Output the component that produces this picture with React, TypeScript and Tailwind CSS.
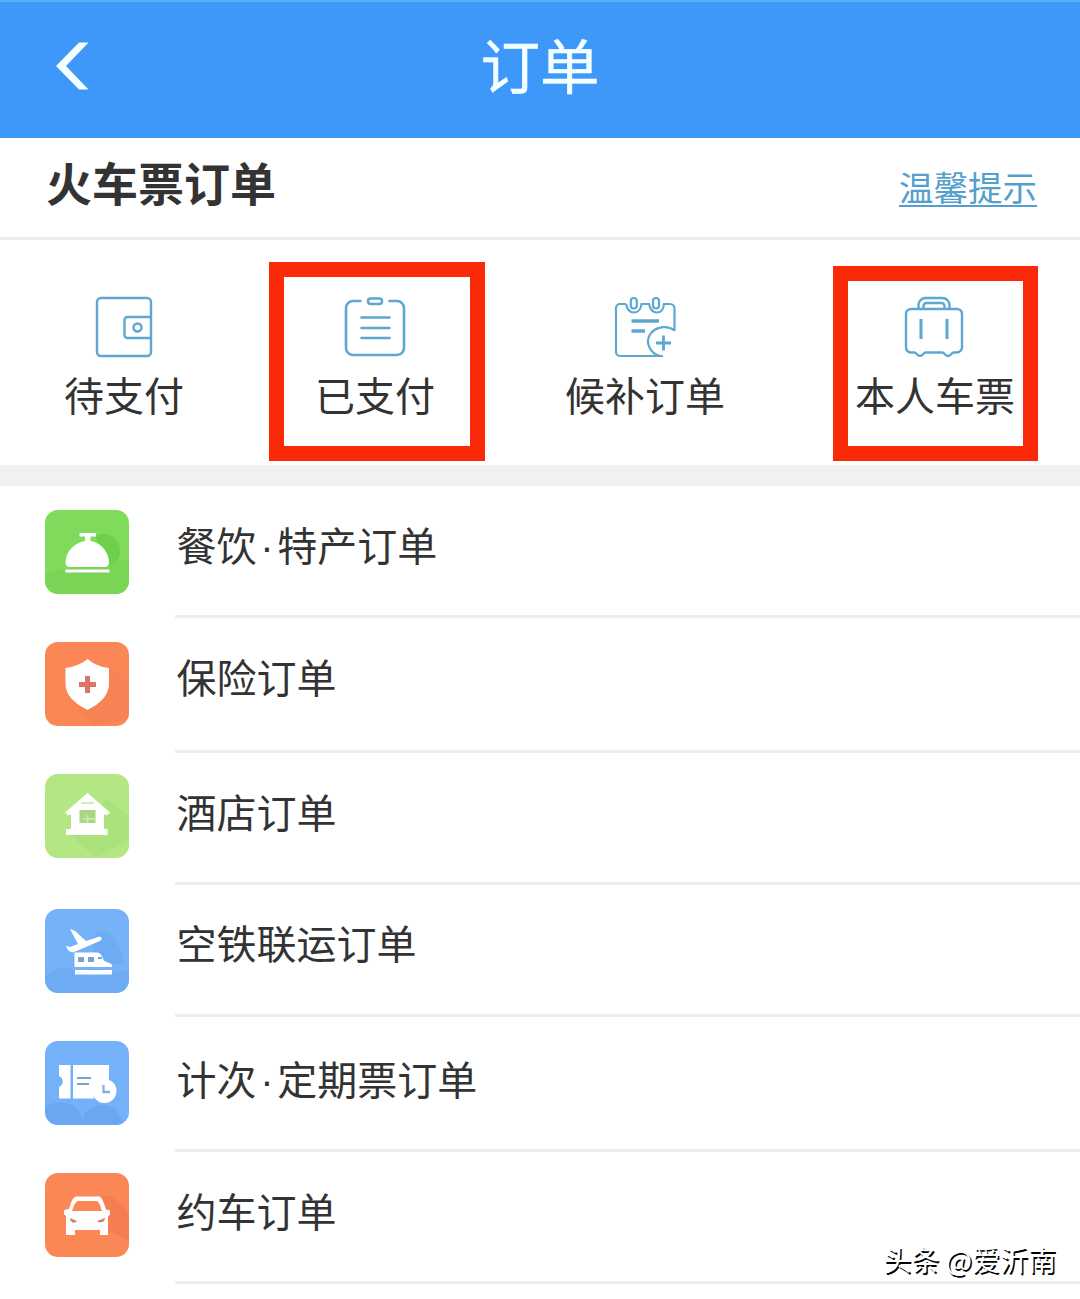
import React from "react";

function WalletIcon() {
  return (
    <svg width="64" height="64" viewBox="0 0 64 64" fill="none" stroke="#5da7d0" strokeWidth="2.4">
      <rect x="5" y="2" width="54" height="58" rx="4" />
      <path d="M59 21H35.500a3 3 0 0 0-3 3v15a3 3 0 0 0 3 3H59" />
      <circle cx="45.500" cy="31.500" r="4" />
    </svg>
  );
}

function ClipboardIcon() {
  return (
    <svg width="64" height="64" viewBox="0 0 64 64" fill="none" stroke="#5da7d0" strokeWidth="2.6" strokeLinecap="round">
      <path d="M17.500 5H10a7 7 0 0 0-7 7v40a7 7 0 0 0 7 7h44a7 7 0 0 0 7-7V12a7 7 0 0 0-7-7h-7.500" />
      <rect x="25" y="2.500" width="14" height="5.500" rx="2.700" />
      <path d="M18.500 21.500H46.500M18.500 32H46.500M18.500 42H46.500" />
    </svg>
  );
}

function CalendarPlusIcon() {
  return (
    <svg width="64" height="64" viewBox="0 0 64 64" fill="none" stroke="#5da7d0" strokeWidth="2.2">
      <path d="M13 8H7a4 4 0 0 0-4 4v44a4 4 0 0 0 4 4h43" />
      <path d="M13 8c1 5 4 8.500 8 8.500S28 13 28.500 8H36c1 5 4 8.500 8 8.500S50.500 13 51 8h6a4.500 4.500 0 0 1 4.500 4.500V35" />
      <rect x="17.800" y="2" width="6" height="10.500" rx="3" />
      <rect x="40" y="2" width="6" height="10.500" rx="3" />
      <path d="M61.500 34.500C54 28.500 42 31 37 38.500c-5 8 0 19 10 21.500" />
      <path d="M18.500 25H46M18.500 35H32" strokeWidth="3.400" />
      <path d="M43 47H58M50.500 39.500V54.500" strokeWidth="2.800" />
    </svg>
  );
}

function SuitcaseIcon() {
  return (
    <svg width="64" height="64" viewBox="0 0 64 64" fill="none" stroke="#5da7d0" strokeWidth="2.4">
      <path d="M15.500 13V9a7 7 0 0 1 7-7h17a7 7 0 0 1 7 7v4" />
      <path d="M20.500 13V10a3 3 0 0 1 3-3h15a3 3 0 0 1 3 3v3" />
      <path d="M8 13h46a5 5 0 0 1 5 5v33a5.500 5.500 0 0 1-5.500 5.500H50.500c-2 0-2.500 3.500-5.500 3.500s-3.500-3.500-5.500-3.500h-17c-2 0-2.500 3.500-5.500 3.500s-3.500-3.500-5.500-3.500H8A5 5 0 0 1 3 51V18a5 5 0 0 1 5-5Z" />
      <path d="M18 23V43M44 23V43" strokeWidth="3" />
    </svg>
  );
}

function BellTile() {
  return (
    <svg width="84" height="84" viewBox="0 0 84 84">
      <rect width="84" height="84" fill="#80da5c" />
      <path d="M50 26c12-6 25 2 25 15 0 8-4 13-12 15Z" fill="#69cc47" opacity=".8" />
      <path d="M0 64l26-6 58-8v34H0Z" fill="#75d252" opacity=".55" />
      <path d="M34.500 23H51v3.500h-5.500V31c11 2 18.500 11 18.500 22 0 2-1.500 4-4 4H24.500c-2.500 0-4-2-4-4 0-11 8-20 19.500-22v-4.500h-5.500ZM20.500 59.500H64.500v3H20.500Z" fill="#fff" />
    </svg>
  );
}

function ShieldTile() {
  return (
    <svg width="84" height="84" viewBox="0 0 84 84">
      <rect width="84" height="84" fill="#fb8756" />
      <path d="M64 25l20 17v35L48 84 27 58Z" fill="#f27950" opacity=".35" />
      <path d="M42.500 17c6 5 13 8 21.500 9v16c0 11-9 20-21.500 26C30 62 20.500 53 20.500 42V26c8-1 16-4 22-9Z" fill="#fff" />
      <path d="M42.500 34v17M34 42.500h17" stroke="#dd7465" strokeWidth="5" />
    </svg>
  );
}

function HouseTile() {
  return (
    <svg width="84" height="84" viewBox="0 0 84 84">
      <rect width="84" height="84" fill="#b3e783" />
      <path d="M62 25l22 17v24L50 84 27 62Z" fill="#a2dc70" opacity=".4" />
      <path d="M42.500 19L65 38.500l-3.500 3-2.500-1.500v15h3.500v6H21v-6h5V40l-2.500 1.500-3.500-3Z" fill="#fff" />
      <path d="M34.500 36h16v13h-16Z" fill="#a9d884" />
      <path d="M42.500 41v8M38 45h12" stroke="#cceab4" strokeWidth="1.500" />
      <path d="M36 29h13" stroke="#d1edbb" strokeWidth="2" />
    </svg>
  );
}

function PlaneTile() {
  return (
    <svg width="84" height="84" viewBox="0 0 84 84">
      <rect width="84" height="84" fill="#76b2f8" />
      <path d="M47 28c6-7 14-7 20-1 6 7 11 17 12 28H50ZM0 67c16-12 25-10 35 0 8-8 20-10 29-1 7-5 13-6 20-2v20H0Z" fill="#619fe9" opacity=".4" />
      <path d="M25 20l5 2 11 10 12-4c4-1 5 2 2 4L29 43c-4 1-6-1-8-6l4 1 8-3Z" fill="#fff" />
      <path d="M29.500 43.500H52c4 0 5 4 7 8 2 2 8 2 8 5v1.500H29.500ZM30 61h37v4.500H30Z" fill="#fff" />
      <path d="M33 48h6v5h-6ZM43 48h6v5h-6ZM53 48h4v2h-4ZM53 51.500h5" fill="#78a4d1" />
    </svg>
  );
}

function TicketTile() {
  return (
    <svg width="84" height="84" viewBox="0 0 84 84">
      <rect width="84" height="84" fill="#74b1f8" />
      <path d="M0 65c14-6 24-4 31 2 5 4 6 10 6 17H0ZM36 84c2-13 10-20 22-20s17 8 20 20Z" fill="#609fe9" opacity=".55" />
      <path d="M14 24h11.500v33.500H14V46c5-2 5-9 0-11ZM28 24h36v15c-7-2-15 3-16 12l1 6.500H28Z" fill="#fff" />
      <path d="M32 37h14M32 43h12" stroke="#79a4d2" strokeWidth="2" />
      <circle cx="59.500" cy="50" r="12" fill="#fff" />
      <path d="M58.500 44v7H65" fill="none" stroke="#83b0e0" strokeWidth="2.300" />
    </svg>
  );
}

function CarTile() {
  return (
    <svg width="84" height="84" viewBox="0 0 84 84">
      <rect width="84" height="84" fill="#fb8756" />
      <path d="M57 23c10-2 20 8 27 18v27L62 57Z" fill="#ed714d" opacity=".45" />
      <path fillRule="evenodd" d="M31 23.500h23c3.500 1 5 7 7 13l4 1v4l-2 2V62h-8v-5H30v5h-9V43l-2-2v-4l5-1c2-6 3-11 7-12.500ZM32.500 28c-3 2-4 6-5.500 10h30c-1.500-4-2-8-5-10Z" fill="#fff" />
      <path d="M25 45l7 3c-2 3-7 2-7-3ZM60 45l-8 3c3 3 8 1 8-3Z" fill="#cf8269" />
    </svg>
  );
}

const rows = [
  { label: ["餐饮", "特产订单"], Tile: BellTile, height: "h-[132px]", icon: "mt-[24px]", text: "mt-[31px]" },
  { label: ["保险订单"], Tile: ShieldTile, height: "h-[135px]", icon: "mt-[24px]", text: "mt-[31px]" },
  { label: ["酒店订单"], Tile: HouseTile, height: "h-[132px]", icon: "mt-[21px]", text: "mt-[31px]" },
  { label: ["空铁联运订单"], Tile: PlaneTile, height: "h-[132px]", icon: "mt-[24px]", text: "mt-[30px]" },
  { label: ["计次", "定期票订单"], Tile: TicketTile, height: "h-[135px]", icon: "mt-[24px]", text: "mt-[34px]" },
  { label: ["约车订单"], Tile: CarTile, height: "h-[132px]", icon: "mt-[21px]", text: "mt-[31px]" },
];

const shortcuts = [
  { label: "待支付", Icon: WalletIcon, cell: "w-[248px]", frame: "" },
  { label: "已支付", Icon: ClipboardIcon, cell: "w-[254px]", frame: "left-[21px] top-[22px] w-[216px] h-[199px]" },
  { label: "候补订单", Icon: CalendarPlusIcon, cell: "w-[286px]", frame: "" },
  { label: "本人车票", Icon: SuitcaseIcon, cell: "w-[292px] pl-[2px]", frame: "left-[45px] top-[26px] w-[205px] h-[195px]" },
];

export default function App() {
  return (
    <div className="relative flex h-[1299px] w-[1080px] flex-col overflow-hidden bg-white font-['Noto_Sans_CJK_SC',sans-serif] text-[#333333]">
      <header className="grid h-[138px] shrink-0 grid-cols-[1fr_auto_1fr] items-center border-t-2 border-[#58adf9] bg-[#3d98f9] pb-[8px] text-[#f4ffff]">
        <svg className="ml-[54px]" width="38" height="52" viewBox="0 0 38 52">
          <path d="M25 2.500H34.500L12 26l22.500 23.500H25L2 26Z" fill="currentColor" />
        </svg>
        <h1 className="pb-[6px] text-[59.500px] leading-[80px] [-webkit-text-stroke:0.500px_currentColor]">订单</h1>
        <span />
      </header>
      <section className="flex h-[102px] shrink-0 items-center justify-between border-b-[3px] border-[#eeeeee] pl-[46px] pr-[43px]">
        <h2 className="pb-[14px] text-[46px] font-bold leading-[60px]">火车票订单</h2>
        <a className="pb-[4px] text-[34.500px] leading-[50px] text-[#539fce] underline decoration-2 underline-offset-[4px]">温馨提示</a>
      </section>
      <nav className="flex h-[225px] shrink-0">
        {shortcuts.map(({ label, Icon, cell, frame }) => (
          <div key={label} className={`relative flex shrink-0 flex-col items-center pt-[56px] ${cell}`}>
            <Icon />
            <span className="mt-[4px] whitespace-nowrap text-[40px] leading-[60px]">{label}</span>
            {frame && <div className={`absolute border-[15px] border-[#fa2a08] ${frame}`} />}
          </div>
        ))}
      </nav>
      <div className="h-[21px] shrink-0 bg-[#f1f1f1]" />
      <ul className="flex shrink-0 flex-col">
        {rows.map(({ label, Tile, height, icon, text }) => (
          <li key={label.join("·")} className={`flex items-start pl-[45px] ${height}`}>
            <div className={`size-[84px] shrink-0 overflow-hidden rounded-[13px] ${icon}`}>
              <Tile />
            </div>
            <div className="ml-[46px] h-full flex-1 border-b-[3px] border-[#eeeeee]">
              <p className={`pl-[1.500px] font-['Liberation_Sans','Noto_Sans_CJK_SC',sans-serif] text-[40px] leading-[60px] ${text}`}>
                {label[0]}
                {label[1] && (
                  <>
                    <span className="px-[3.700px]">·</span>
                    {label[1]}
                  </>
                )}
              </p>
            </div>
          </li>
        ))}
      </ul>
      <div className="absolute right-[24px] top-[1239px] whitespace-nowrap text-[28px] leading-[40px] text-white [text-shadow:1.500px_1.500px_0_#000]">
        头条 @爱沂南
      </div>
    </div>
  );
}
